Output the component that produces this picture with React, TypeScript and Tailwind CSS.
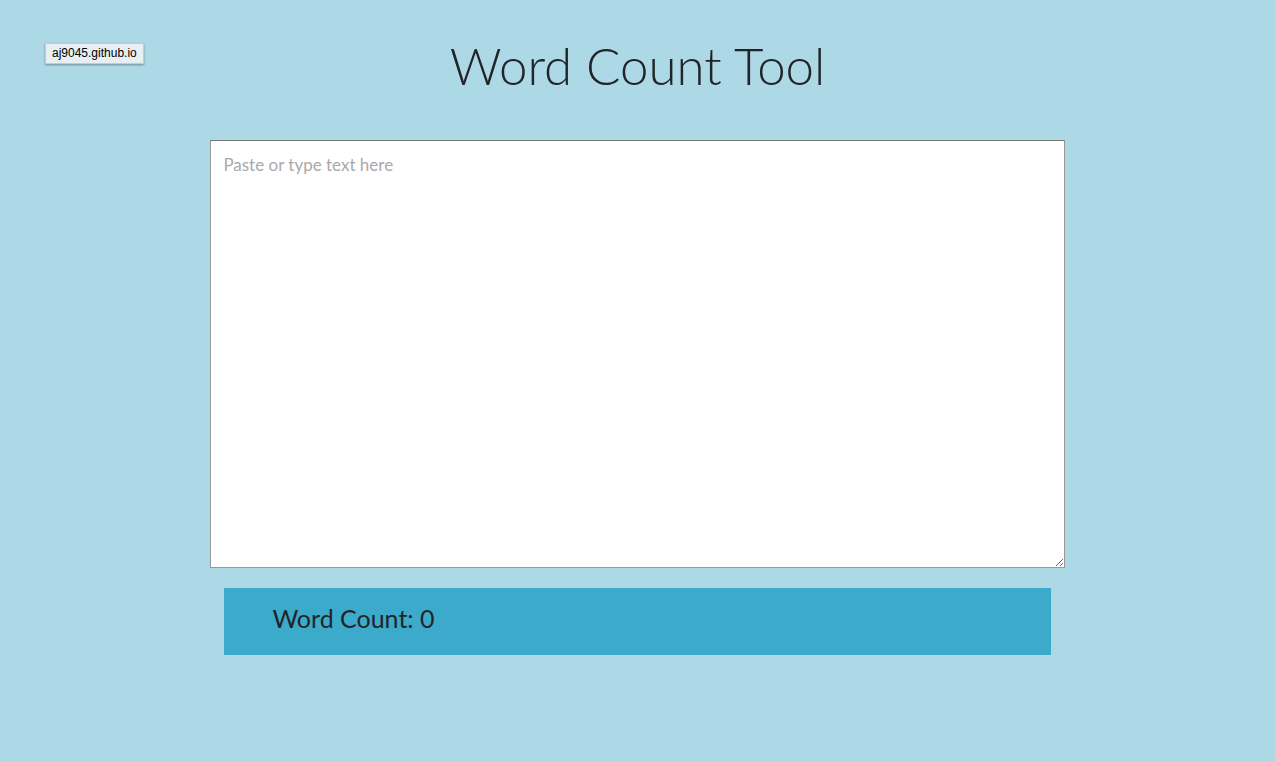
import { useState } from "react";

export default function App() {
  const [text, setText] = useState("");
  const count = text.trim() ? text.trim().split(/\s+/).length : 0;

  return (
    <div className="relative min-h-screen bg-[#add8e6] pt-8 pb-12 font-['Coming_Soon','Lato',sans-serif] text-[#212529]">
      <div
        role="tooltip"
        className="absolute top-[43px] left-[45px] border border-[#c3cdd1] bg-[#e8eff2] px-1.5 font-['Liberation_Sans',sans-serif] text-xs leading-[19px] text-black shadow-[0_1px_2px_rgba(0,0,0,0.35)]"
      >
        aj9045.github.io
      </div>
      <main className="mx-auto flex w-[67%] flex-col">
        <h1 className="text-center text-[51px] leading-[68px] font-light">Word Count Tool</h1>
        <textarea
          aria-label="Text to count"
          placeholder="Paste or type text here"
          value={text}
          onChange={(e) => setText(e.target.value)}
          className="mt-10 h-[428px] resize border border-[#999999] border-t-[#777777] bg-white px-3 py-3 text-[17px] leading-6 outline-none placeholder:text-[#a9a9a9]"
        />
        <section className="mx-3.5 mt-5 bg-[#3caaca] px-12 pt-3 pb-[19px]">
          <p className="text-[25px] leading-9" aria-live="polite">
            Word Count: {count}
          </p>
        </section>
      </main>
    </div>
  );
}
